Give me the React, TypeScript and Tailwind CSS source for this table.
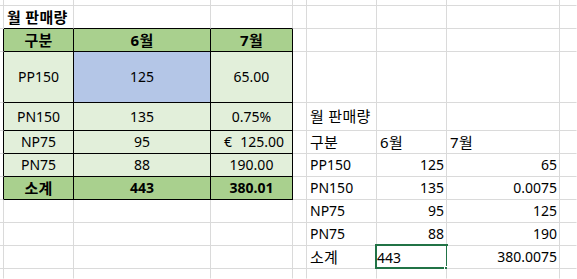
import React from 'react';

type Align = 'left' | 'center' | 'right';

interface CellDef {
  text?: React.ReactNode;
  bg?: string;
  bold?: boolean;
  align?: Align;
  selected?: boolean;
}

const COLS = 9;
const ROWS = 12;

// Hangul renders a touch larger than the Latin in the sheet
const K: React.FC<{ children: React.ReactNode }> = ({ children }) => (
  <span className="text-[15px] tracking-[0.3px]">{children}</span>
);

// sheet content keyed by "row-col"
const cells: Record<string, CellDef> = {
  '1-1': { text: <K>월 판매량</K>, bold: true },

  '2-1': { text: <K>구분</K>, bg: 'bg-[#a9d08e]', bold: true, align: 'center' },
  '2-2': { text: <K>6월</K>, bg: 'bg-[#a9d08e]', bold: true, align: 'center' },
  '2-3': { text: <K>7월</K>, bg: 'bg-[#a9d08e]', bold: true, align: 'center' },

  '3-1': { text: 'PP150', bg: 'bg-[#e2efda]', align: 'center' },
  '3-2': { text: '125', bg: 'bg-[#b4c6e7]', align: 'center' },
  '3-3': { text: '65.00', bg: 'bg-[#e2efda]', align: 'center' },

  '4-1': { text: 'PN150', bg: 'bg-[#e2efda]', align: 'center' },
  '4-2': { text: '135', bg: 'bg-[#e2efda]', align: 'center' },
  '4-3': { text: '0.75%', bg: 'bg-[#e2efda]', align: 'center' },

  '5-1': { text: 'NP75', bg: 'bg-[#e2efda]', align: 'center' },
  '5-2': { text: '95', bg: 'bg-[#e2efda]', align: 'center' },
  '5-3': {
    text: (
      <span className="flex w-full justify-between pl-[10px] pr-[8px]">
        <span>€</span>
        <span>125.00</span>
      </span>
    ),
    bg: 'bg-[#e2efda]',
  },

  '6-1': { text: 'PN75', bg: 'bg-[#e2efda]', align: 'center' },
  '6-2': { text: '88', bg: 'bg-[#e2efda]', align: 'center' },
  '6-3': { text: '190.00', bg: 'bg-[#e2efda]', align: 'center' },

  '7-1': { text: <K>소계</K>, bg: 'bg-[#a9d08e]', bold: true, align: 'center' },
  '7-2': { text: '443', bg: 'bg-[#a9d08e]', bold: true, align: 'center' },
  '7-3': { text: '380.01', bg: 'bg-[#a9d08e]', bold: true, align: 'center' },

  // plain copy on the right
  '4-5': { text: <K>월 판매량</K> },
  '5-5': { text: <K>구분</K> },
  '5-6': { text: <K>6월</K> },
  '5-7': { text: <K>7월</K> },
  '6-5': { text: 'PP150' },
  '6-6': { text: '125', align: 'right' },
  '6-7': { text: '65', align: 'right' },
  '7-5': { text: 'PN150' },
  '7-6': { text: '135', align: 'right' },
  '7-7': { text: '0.0075', align: 'right' },
  '8-5': { text: 'NP75' },
  '8-6': { text: '95', align: 'right' },
  '8-7': { text: '125', align: 'right' },
  '9-5': { text: 'PN75' },
  '9-6': { text: '88', align: 'right' },
  '9-7': { text: '190', align: 'right' },
  '10-5': { text: <K>소계</K> },
  '10-6': { text: '443', selected: true },
  '10-7': { text: '380.0075', align: 'right' },
};

const inTable = (r: number, c: number) => r >= 2 && r <= 7 && c >= 1 && c <= 3;

const Cell: React.FC<{ r: number; c: number }> = ({ r, c }) => {
  const def = cells[`${r}-${c}`] ?? {};
  const rightBlack = r >= 2 && r <= 7 && c <= 3;
  const bottomBlack = r >= 1 && r <= 7 && c >= 1 && c <= 3;

  const right =
    c === COLS - 1 ? 'border-r-transparent' : rightBlack ? 'border-r-black' : 'border-r-[#dadada]';
  const bottom =
    r === ROWS - 1 ? 'border-b-transparent' : bottomBlack ? 'border-b-black' : 'border-b-[#dadada]';

  const justify =
    def.align === 'center' ? 'justify-center' : def.align === 'right' ? 'justify-end pr-[2px]' : 'justify-start pl-[3px]';

  return (
    <div
      className={`relative flex items-center whitespace-nowrap border-r border-b ${right} ${bottom} ${
        def.bg ?? (inTable(r, c) ? 'bg-[#e2efda]' : 'bg-white')
      } ${def.selected ? 'justify-start pl-0 pt-[2px]' : justify} ${def.bold ? 'font-bold' : 'font-normal'}`}
    >
      {def.text}
      {def.selected && (
        <>
          <div className="pointer-events-none absolute -left-[2px] -top-[2px] h-[25px] w-[73px] border-2 border-[#217346]" />
          <div className="absolute -bottom-[3px] -right-[3px] h-[5px] w-[5px] border border-white bg-[#217346]" />
        </>
      )}
    </div>
  );
};

export default function App() {
  return (
    <div
      className="h-[279px] w-[577px] overflow-hidden bg-white text-[14px] leading-none text-black"
      style={{ fontFamily: '"Noto Sans", "Noto Sans CJK KR", sans-serif' }}
    >
      <div className="grid h-full grid-cols-[4px_70px_137px_82px_14px_70px_70px_113px_1fr] grid-rows-[6px_23px_23px_51px_28px_23px_23px_23px_23px_23px_23px_1fr]">
        {Array.from({ length: ROWS }).map((_, r) =>
          Array.from({ length: COLS }).map((_, c) => <Cell key={`${r}-${c}`} r={r} c={c} />)
        )}
      </div>
    </div>
  );
}
